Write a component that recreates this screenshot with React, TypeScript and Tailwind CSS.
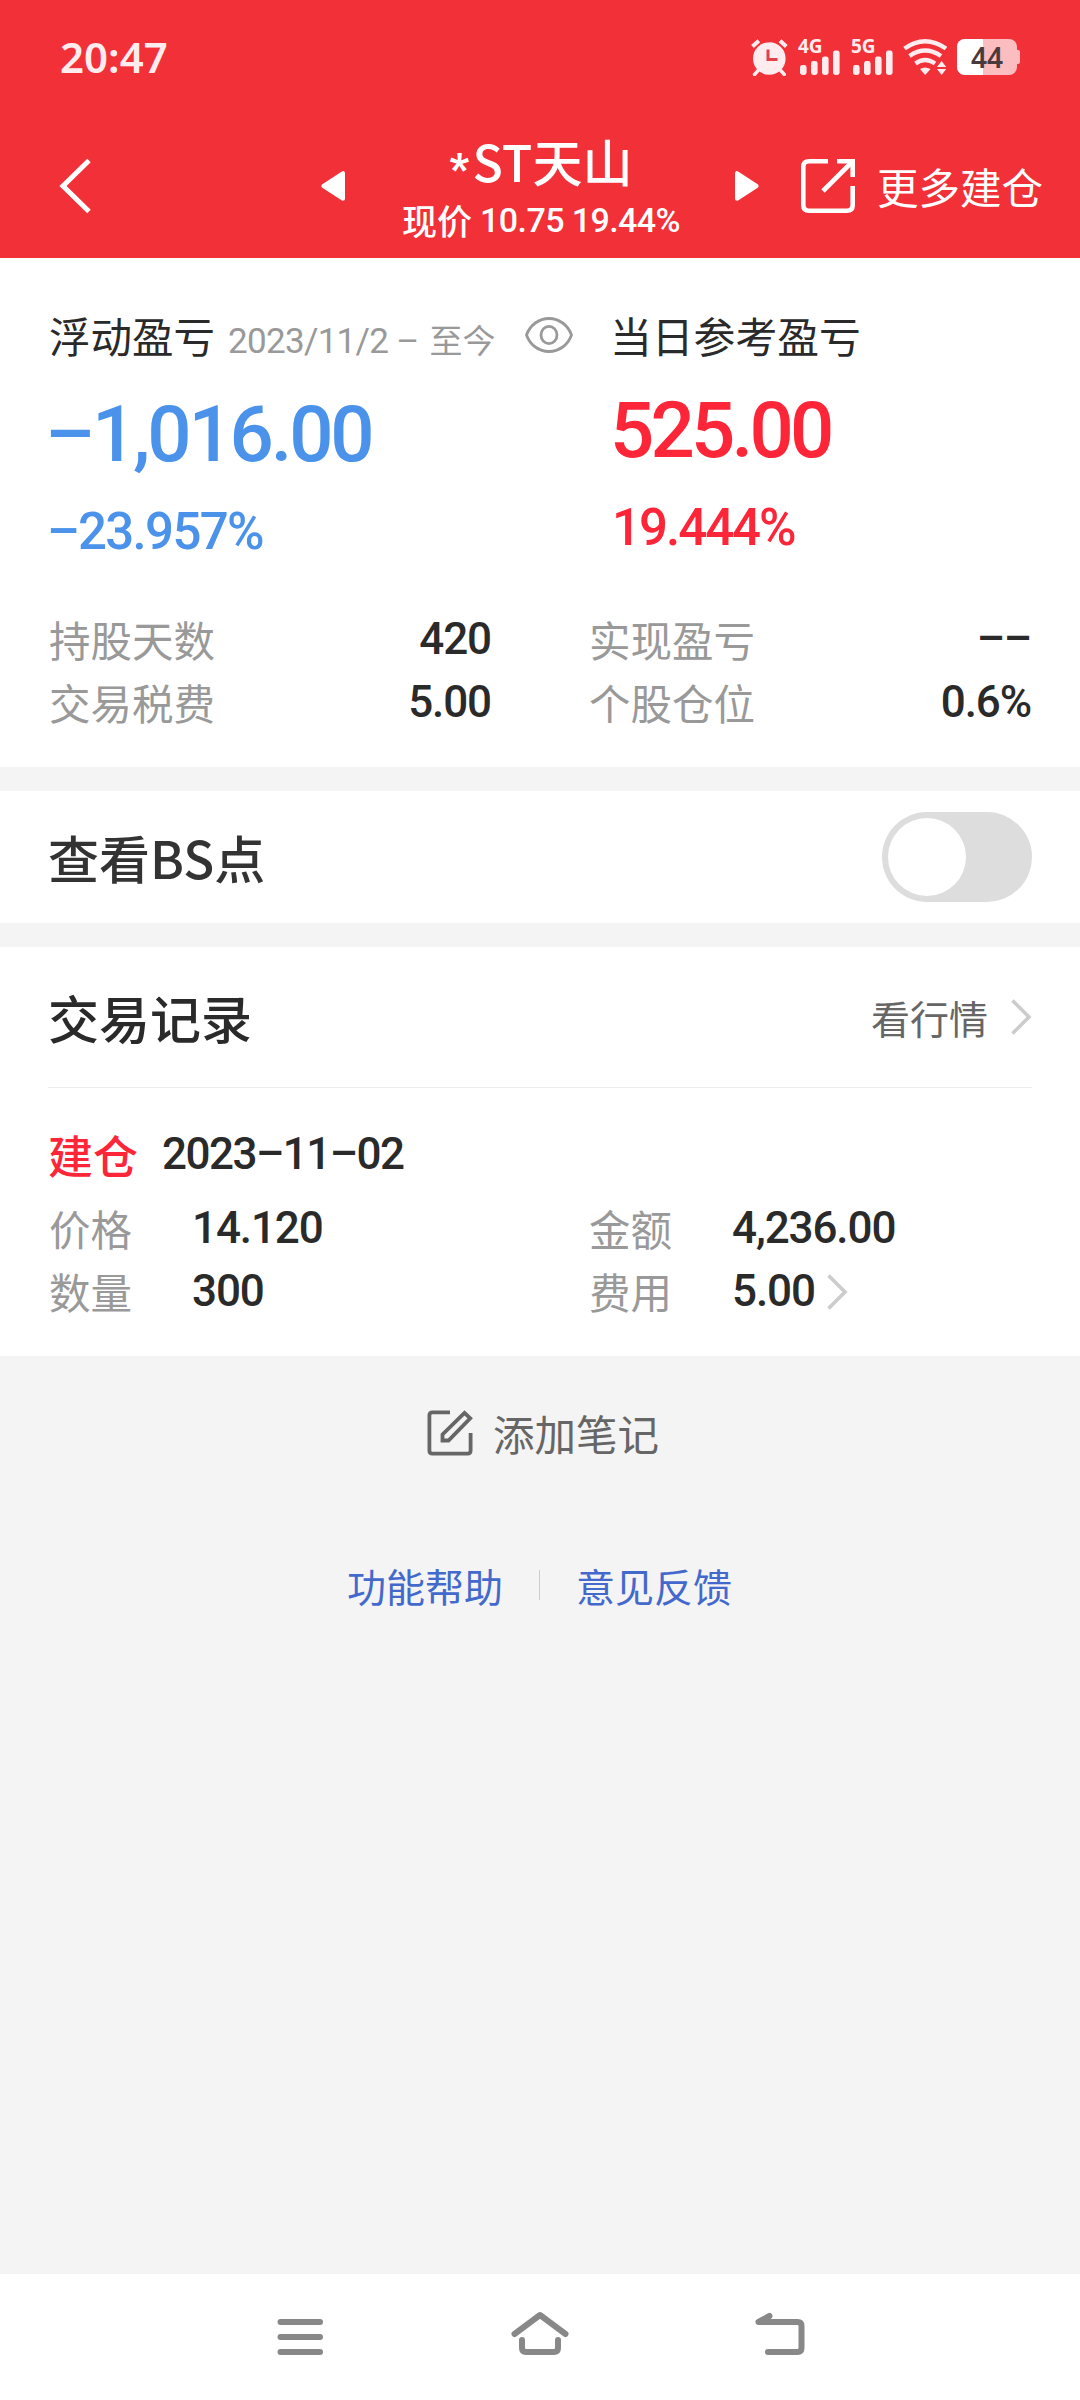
import React from 'react';

const stats = [
  { label: '持股天数', value: '420' },
  { label: '实现盈亏', value: '––' },
  { label: '交易税费', value: '5.00' },
  { label: '个股仓位', value: '0.6%' },
];

const Num: React.FC<{ className?: string; children: React.ReactNode }> = ({ className = '', children }) => (
  <span className={`font-['Roboto',sans-serif] font-medium whitespace-nowrap ${className}`}>{children}</span>
);

const Chevron: React.FC<{ className?: string }> = ({ className = '' }) => (
  <svg className={className} width="22" height="38" viewBox="0 0 22 38" fill="none" stroke="#cccccc" strokeWidth="3.6">
    <path d="M2.5 2.5 L19 19 L2.5 35.5" />
  </svg>
);

const AlarmIcon = () => (
  <svg width="37" height="37" viewBox="0 0 37 37" fill="none" stroke="#ffecee" strokeWidth="4">
    <circle cx="18.3" cy="19.5" r="16.3" fill="#ffecee" stroke="none" />
    <path d="M1.5 7.5 L7.8 1.8 M29 1.8 L35.3 7.5" />
    <path d="M3.5 35.5 L8 30.5 M33.3 35.5 L28.8 30.5" strokeLinecap="round" strokeWidth="3.4" />
    <path d="M17 10.5 V20.5 H26.5" stroke="#e4404a" strokeWidth="3" />
  </svg>
);

const Signal: React.FC<{ label: string }> = ({ label }) => (
  <div className="relative h-[36px] w-[43px]">
    <span className="absolute left-0 top-[-3px] font-['Noto_Sans',sans-serif] text-[19px] font-bold leading-[20px] text-[#ffecee]">
      {label}
    </span>
    <svg width="43" height="36" viewBox="0 0 43 36" fill="#ffecee">
      <rect x="2" y="26" width="6.6" height="10" rx="2.4" />
      <rect x="13" y="22" width="6.6" height="14" rx="2.4" />
      <rect x="24" y="17.5" width="6.6" height="18.5" rx="2.4" />
      <rect x="35" y="11.5" width="6.6" height="24.5" rx="2.4" />
    </svg>
  </div>
);

const WifiIcon = () => (
  <svg width="45" height="36" viewBox="0 0 45 36" fill="none" stroke="#ffecee" strokeWidth="4.4">
    <path d="M1.5 9.5 Q22 -5 43 9.5" />
    <path d="M6.5 17 Q22 6 38 17" />
    <path d="M12.5 24.5 Q22 17.5 32 24.5" />
    <path d="M17 30 Q22 27 27.5 30 L22.2 36 Z" fill="#ffecee" stroke="none" />
    <path d="M34 28 L38.6 22 L43.2 28 Z M34 30 L38.6 36 L43.2 30 Z" fill="#ffecee" stroke="none" />
  </svg>
);

const Battery = () => (
  <div className="flex items-center">
    <div className="relative flex h-[36px] w-[60px] items-center justify-center overflow-hidden rounded-[8px] bg-[#fcbdc1]">
      <div className="absolute inset-y-0 left-0 w-[26px] bg-white" />
      <span className="relative font-['Noto_Sans',sans-serif] text-[28px] font-semibold leading-[36px] text-[#4b3a3b]">44</span>
    </div>
    <div className="h-[14px] w-[3px] rounded-r-[2px] bg-[#fcbdc1]" />
  </div>
);

const StatusBar = () => (
  <div className="flex h-[114px] items-center justify-between px-[60px]">
    <span className="font-['Noto_Sans',sans-serif] text-[42px] font-semibold leading-[60px] text-[#ffecee]">20:47</span>
    <div className="flex items-center">
      <AlarmIcon />
      <div className="ml-[10px] flex gap-[10px]">
        <Signal label="4G" />
        <Signal label="5G" />
      </div>
      <div className="mx-[9px]">
        <WifiIcon />
      </div>
      <Battery />
    </div>
  </div>
);

const TitleBar = () => (
  <div className="flex h-[144px] items-center pl-[57px]">
    <svg width="36" height="56" viewBox="0 0 36 56" fill="none" stroke="white" strokeWidth="5">
      <path d="M32 2.5 L6 28 L32 53.5" />
    </svg>
    <svg className="ml-[228px]" width="24" height="30" viewBox="0 0 24 30" fill="white" stroke="white" strokeWidth="4" strokeLinejoin="round">
      <path d="M22 2.2 V27.8 L2.4 15 Z" />
    </svg>
    <div className="flex h-full w-[390px] flex-col items-center pl-[2px] pt-[16px]">
      <h1 className="flex h-[60px] text-[50px] font-medium leading-[60px]">
        <span className="mt-[15px] w-[23px] font-['Roboto',sans-serif] text-[42px] font-black leading-[48px]">*</span>
        <span>ST天山</span>
      </h1>
      <div className="flex h-[60px] items-center">
        <span className="text-[35px] font-medium leading-[56px]">现价</span>
        <Num className="ml-2 text-[34px] leading-[56px] tracking-[-0.6px]">10.75 19.44%</Num>
      </div>
    </div>
    <svg width="24" height="30" viewBox="0 0 24 30" fill="white" stroke="white" strokeWidth="4" strokeLinejoin="round">
      <path d="M2 2.2 V27.8 L21.6 15 Z" />
    </svg>
    <svg className="ml-[42px]" width="54" height="54" viewBox="0 0 54 54" fill="none" stroke="white" strokeWidth="4.6">
      <path d="M27 2.3 H8 Q2.3 2.3 2.3 8 V46 Q2.3 51.7 8 51.7 H46 Q51.7 51.7 51.7 46 V27" />
      <path d="M36 2.3 H51.7 V18" />
      <path d="M22 32 L51 3" />
    </svg>
    <span className="ml-[22px] text-[41.5px] leading-[60px]">更多建仓</span>
  </div>
);

const Summary = () => (
  <section className="h-[509px] bg-white px-12 pt-[47px]">
    <div className="grid grid-cols-[562px_1fr]">
      <div>
        <div className="flex h-[60px] items-center">
          <div className="mt-[6px] flex items-baseline pl-px">
            <span className="text-[41.5px] leading-[60px]">浮动盈亏</span>
            <span className="ml-[13px] font-['Roboto',sans-serif] text-[35px] leading-[60px] tracking-[-0.7px] text-[#999999]">
              2023/11/2 –
            </span>
            <span className="ml-[11px] text-[33px] leading-[60px] text-[#999999]">至今</span>
          </div>
          <svg className="ml-[29px]" width="48" height="36" viewBox="0 0 48 36" fill="none" stroke="#999999" strokeWidth="2.8">
            <path d="M1.5 18 C5 8 14 1.5 24 1.5 S43 8 46.5 18 C43 28 34 34.5 24 34.5 S5 28 1.5 18 Z" />
            <ellipse cx="24" cy="18" rx="8" ry="8.6" />
          </svg>
        </div>
        <div className="-ml-[3px] mt-[28px] h-[84px] text-[#4a92ea]">
          <Num className="text-[78px] leading-[84px] tracking-[-3.2px]">–1,016.00</Num>
        </div>
        <div className="-ml-px mt-[25px] h-[60px] text-[#4a92ea]">
          <Num className="text-[51px] leading-[60px] tracking-[-1.7px]">–23.957%</Num>
        </div>
      </div>
      <div>
        <div className="flex h-[60px] items-center text-[41.8px] leading-[60px]">当日参考盈亏</div>
        <div className="mt-[24px] h-[84px] text-[#fd2639]">
          <Num className="text-[78px] leading-[84px] tracking-[-3.8px]">525.00</Num>
        </div>
        <div className="mt-[25px] h-[60px] pl-[2px] text-[#fd2639]">
          <Num className="text-[51px] leading-[60px] tracking-[-2px]">19.444%</Num>
        </div>
      </div>
    </div>
    <div className="mt-[46px] grid grid-cols-[443px_443px] gap-x-[97px]">
      {stats.map(item => (
        <div key={item.label} className="flex h-[63px] items-center justify-between">
          <span className="pl-px text-[41.5px] leading-[63px] text-[#999999]">{item.label}</span>
          <Num className="text-[44px] leading-[63px] tracking-[-1.1px]">{item.value}</Num>
        </div>
      ))}
    </div>
  </section>
);

const Field: React.FC<{ label: string; value: string; arrow?: boolean }> = ({ label, value, arrow }) => (
  <div className="flex h-[63px] items-center">
    <span className="w-[144px] pl-px text-[41.5px] leading-[63px] text-[#999999]">{label}</span>
    <Num className="text-[44px] leading-[63px] tracking-[-1.1px]">{value}</Num>
    {arrow && <Chevron className="ml-[11px]" />}
  </div>
);

const Records = () => (
  <section className="mt-6 h-[409px] bg-white px-12">
    <div className="flex h-[141px] items-center justify-between border-b border-[#eeeeee]">
      <h2 className="text-[51px] font-medium leading-[60px]">交易记录</h2>
      <div className="flex items-center">
        <span className="text-[39px] leading-[60px] text-[#666666]">看行情</span>
        <Chevron className="ml-[22px]" />
      </div>
    </div>
    <div className="mt-[35px] flex h-[63px] items-center">
      <span className="text-[45px] font-medium leading-[63px] text-[#fd2639]">建仓</span>
      <Num className="ml-[24px] text-[44px] leading-[63px] tracking-[-1.5px]">2023–11–02</Num>
    </div>
    <div className="mt-[11px] grid grid-cols-[540px_1fr]">
      <Field label="价格" value="14.120" />
      <Field label="金额" value="4,236.00" />
      <Field label="数量" value="300" />
      <Field label="费用" value="5.00" arrow />
    </div>
  </section>
);

const NavBar = () => (
  <nav className="mt-auto flex h-[126px] items-center justify-center gap-[180px] bg-white">
    <svg width="60" height="60" viewBox="0 0 60 60" fill="none" stroke="#888888" strokeWidth="6" strokeLinecap="round">
      <path d="M10.5 15 H50 M10.5 30 H50 M10.5 45 H50" />
    </svg>
    <svg width="60" height="60" viewBox="0 0 60 60" fill="none" stroke="#888888" strokeWidth="6" strokeLinecap="round" strokeLinejoin="round">
      <path d="M4.5 27 L30 8 L55.5 27" />
      <path d="M12 33 V41 Q12 45 16 45 H44 Q48 45 48 41 V33" />
    </svg>
    <svg width="60" height="60" viewBox="0 0 60 60" fill="none" stroke="#888888" strokeWidth="6" strokeLinecap="round" strokeLinejoin="round">
      <path d="M19.5 9 L8.5 15 H47.5 Q51.5 15 51.5 19 V41 Q51.5 45 47.5 45 H18" />
    </svg>
  </nav>
);

export default function App() {
  return (
    <div className="flex h-[2400px] w-[1080px] flex-col overflow-hidden bg-[#f4f4f4] font-['Noto_Sans_CJK_SC',sans-serif] text-[#2a2a2a]">
      <header className="h-[258px] bg-[#f23038] text-white">
        <StatusBar />
        <TitleBar />
      </header>

      <Summary />

      <section className="mt-6 flex h-[132px] items-center justify-between bg-white px-12">
        <span className="text-[51px] font-medium leading-[60px] text-[#333333]">查看BS点</span>
        <button className="flex h-[90px] w-[150px] items-center rounded-full bg-[#dddddd] pl-[6px]">
          <span className="h-[78px] w-[78px] rounded-full bg-white" />
        </button>
      </section>

      <Records />

      <div className="flex h-[154px] items-center justify-center pl-[5px] text-[#666666]">
        <svg width="48" height="48" viewBox="0 0 48 48" fill="none" stroke="#666666" strokeWidth="3.8">
          <path d="M24 3.4 H6.5 Q3.4 3.4 3.4 6.5 V41.5 Q3.4 44.6 6.5 44.6 H41.5 Q44.6 44.6 44.6 41.5 V24" />
          <path d="M16.5 31.5 V25.5 L38.5 3.8 L44.2 9.3 L22.5 31.5 Z" />
        </svg>
        <span className="ml-[19px] text-[41.5px] leading-[60px]">添加笔记</span>
      </div>

      <div className="flex h-[150px] items-center justify-center gap-9 pr-px text-[39px] leading-[60px] text-[#4469cc]">
        <span>功能帮助</span>
        <span className="h-[30px] w-px bg-[#cccccc]" />
        <span>意见反馈</span>
      </div>

      <NavBar />
    </div>
  );
}
